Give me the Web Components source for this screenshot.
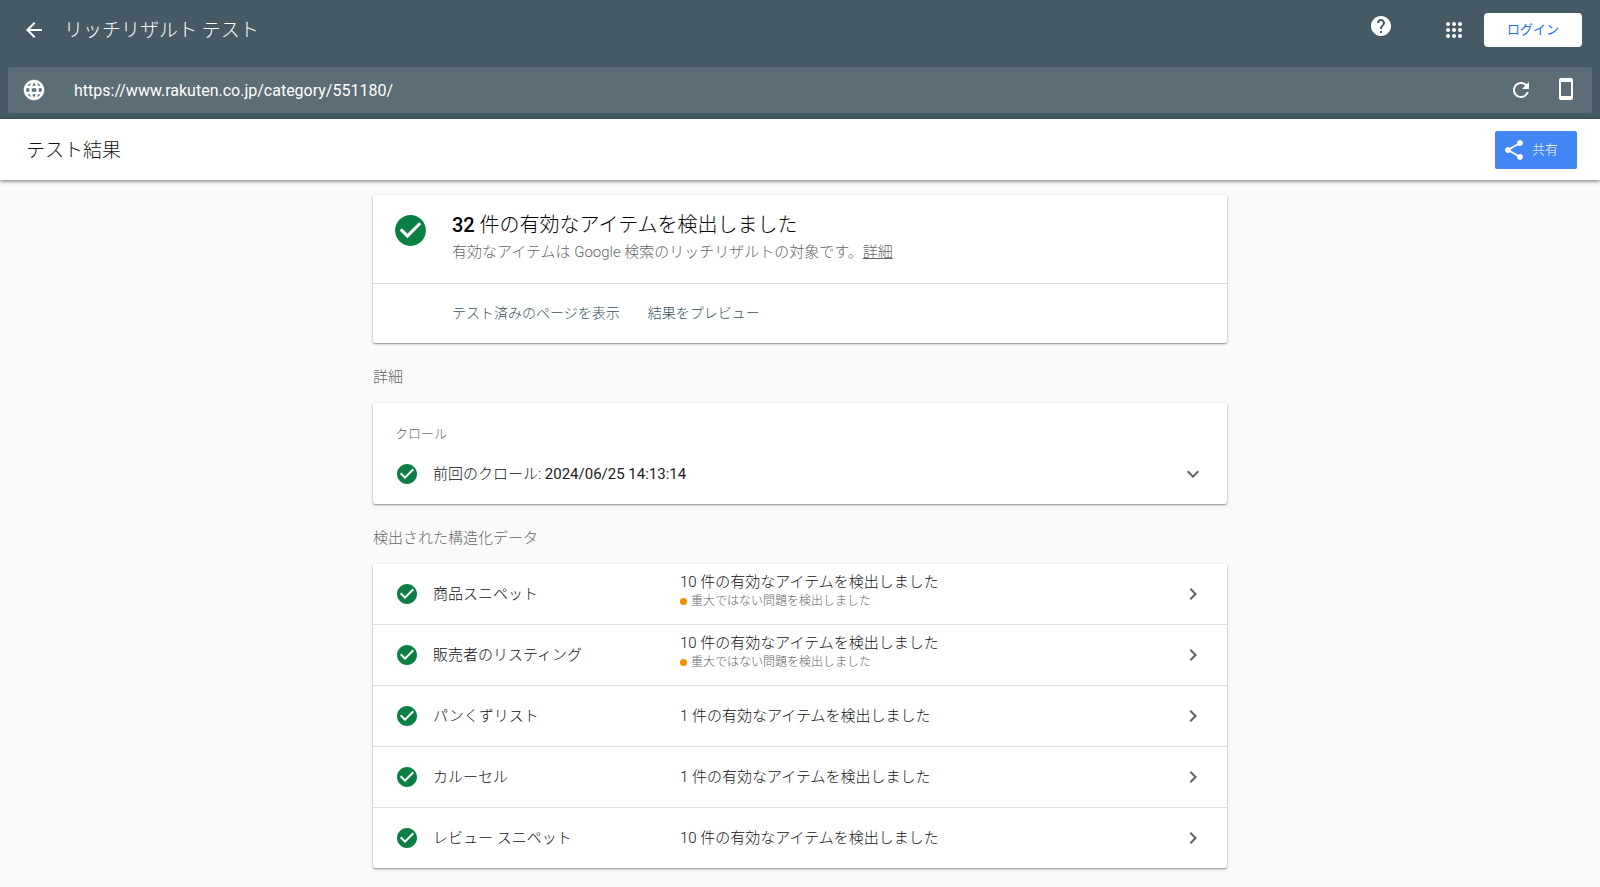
<!DOCTYPE html>
<html lang="ja">
<head>
<meta charset="utf-8">
<meta name="viewport" content="width=device-width, initial-scale=1">
<title>リッチリザルト テスト</title>
<style>
  body {
    margin: 0;
    background: #fafafa;
    color: #111;
    font-family: Roboto, "Noto Sans CJK JP", sans-serif;
    font-size: 15px;
    line-height: 20px;
    --muted: #666;
    --line: #e0e0e0;
    --slate: #455a64;
    --jp: 300;
  }
</style>
</head>
<body>
<rt-page></rt-page>

<script>
const ICONS = {
  back: '<path d="M20 11H7.83l5.59-5.59L12 4l-8 8 8 8 1.41-1.41L7.83 13H20v-2z"/>',
  globe: '<path d="M11.99 2C6.47 2 2 6.48 2 12s4.47 10 9.99 10C17.52 22 22 17.52 22 12S17.52 2 11.99 2zm6.93 6h-2.95a15.65 15.65 0 0 0-1.38-3.56A8.03 8.03 0 0 1 18.92 8zM12 4.04c.83 1.2 1.48 2.53 1.91 3.96h-3.82c.43-1.43 1.08-2.76 1.91-3.96zM4.26 14C4.1 13.36 4 12.69 4 12s.1-1.36.26-2h3.38c-.08.66-.14 1.32-.14 2s.06 1.34.14 2H4.26zm.82 2h2.95c.32 1.25.78 2.45 1.38 3.56A7.99 7.99 0 0 1 5.08 16zm2.95-8H5.08a7.99 7.99 0 0 1 4.33-3.56A15.65 15.65 0 0 0 8.03 8zM12 19.96c-.83-1.2-1.48-2.53-1.91-3.96h3.82c-.43 1.43-1.08 2.76-1.91 3.96zM14.34 14H9.66c-.09-.66-.16-1.32-.16-2s.07-1.35.16-2h4.68c.09.65.16 1.32.16 2s-.07 1.34-.16 2zm.25 5.56c.6-1.11 1.06-2.31 1.38-3.56h2.95a8.03 8.03 0 0 1-4.33 3.56zM16.36 14c.08-.66.14-1.32.14-2s-.06-1.34-.14-2h3.38c.16.64.26 1.31.26 2s-.1 1.36-.26 2h-3.38z" stroke="currentColor" stroke-width=".5"/>',
  help: '<path d="M12 2C6.48 2 2 6.48 2 12s4.48 10 10 10 10-4.48 10-10S17.52 2 12 2zm1 17h-2v-2h2v2zm2.07-7.75l-.9.92C13.45 12.9 13 13.5 13 15h-2v-.5c0-1.1.45-2.1 1.17-2.83l1.24-1.26c.37-.36.59-.86.59-1.41 0-1.1-.9-2-2-2s-2 .9-2 2H8c0-2.21 1.79-4 4-4s4 1.79 4 4c0 .88-.36 1.68-.93 2.25z"/>',
  apps: [6, 12, 18].map(y => [6, 12, 18].map(x => `<circle cx="${x}" cy="${y}" r="2"/>`).join('')).join(''),
  refresh: '<path d="M17.65 6.35A7.96 7.96 0 0 0 12 4c-4.42 0-7.99 3.58-7.99 8s3.57 8 7.99 8c3.73 0 6.84-2.55 7.73-6h-2.08A5.99 5.99 0 0 1 12 18c-3.31 0-6-2.69-6-6s2.69-6 6-6c1.66 0 3.14.69 4.22 1.78L13 11h7V4l-2.35 2.35z"/>',
  phone: '<path d="M17 1.01L7 1c-1.1 0-1.99.9-1.99 2v18c0 1.1.89 2 1.99 2h10c1.1 0 2-.9 2-2V3c0-1.1-.9-1.99-2-1.99zM17 19H7V5h10v14z"/>',
  share: '<path d="M18 16.08c-.76 0-1.44.3-1.96.77L8.91 12.7c.05-.23.09-.46.09-.7s-.04-.47-.09-.7l7.05-4.11c.54.5 1.25.81 2.04.81 1.66 0 3-1.34 3-3s-1.34-3-3-3-3 1.34-3 3c0 .24.04.47.09.7L8.04 9.81C7.5 9.31 6.79 9 6 9c-1.66 0-3 1.34-3 3s1.34 3 3 3c.79 0 1.5-.31 2.04-.81l7.12 4.16c-.05.21-.08.43-.08.65 0 1.61 1.31 2.92 2.92 2.92s2.92-1.31 2.92-2.92-1.31-2.92-2.92-2.92z"/>',
  check: '<path d="M12 2C6.48 2 2 6.48 2 12s4.48 10 10 10 10-4.48 10-10S17.52 2 12 2zm-2 15l-5-5 1.41-1.41L10 14.17l7.59-7.59L19 8l-9 9z"/>',
  down: '<path d="M16.59 8.59L12 13.17 7.41 8.59 6 10l6 6 6-6z"/>',
  right: '<path d="M10 6L8.59 7.41 13.17 12l-4.58 4.59L10 18l6-6z"/>'
};

const define = (name, html) => customElements.define(name, class extends HTMLElement {
  constructor() {
    super();
    const template = document.createElement('template');
    template.innerHTML = html;
    this.attachShadow({ mode: 'open' }).append(template.content.cloneNode(true));
  }
});

const RESET = `
  button { font: inherit; color: inherit; background: none; border: 0; padding: 0; margin: 0; cursor: pointer; text-align: left; }
  h1, h2, p, ul { margin: 0; padding: 0; font: inherit; }
`;

customElements.define('rt-icon', class extends HTMLElement {
  connectedCallback() {
    if (this.shadowRoot) return;
    this.attachShadow({ mode: 'open' }).innerHTML = `
      <style>
        :host { display: block; flex: none; width: var(--size, 24px); height: var(--size, 24px); }
        svg { display: block; width: 100%; height: 100%; fill: currentColor; }
      </style>
      <svg viewBox="0 0 24 24" aria-hidden="true">${ICONS[this.getAttribute('name')]}</svg>`;
  }
});

define('rt-app-bar', `
  <style>${RESET}
    :host { display: flex; align-items: center; height: 60px; padding: 0 18px 0 22px; color: #fff; box-sizing: border-box; }
    h1 { flex: 1; margin-left: 18px; padding-top: 2px; font-size: 19px; line-height: 24px; font-weight: var(--jp); }
    .help { margin-right: 49px; padding-bottom: 8px; }
    .apps { margin-right: 18px; }
    .login { height: 34px; padding: 0 23px; background: #fff; color: #1a73e8; border-radius: 4px; font-size: 13px; font-weight: 400; }
  </style>
  <button aria-label="戻る"><rt-icon name="back"></rt-icon></button>
  <h1><slot></slot></h1>
  <button class="help" aria-label="ヘルプ"><rt-icon name="help"></rt-icon></button>
  <button class="apps" aria-label="アプリ"><rt-icon name="apps"></rt-icon></button>
  <button class="login">ログイン</button>
`);

define('rt-url-bar', `
  <style>${RESET}
    :host { display: flex; align-items: center; height: 46px; margin: 7px 8px 0; padding: 0 14px; background: #5b6d76; color: #fff; border-radius: 2px; box-sizing: border-box; }
    input { flex: 1; min-width: 0; margin: 0 20px 0 28px; padding: 2px 0 0; border: 0; background: none; color: inherit; font: inherit; font-size: 16px; line-height: 24px; outline: 0; }
    .phone { margin-left: 21px; padding-bottom: 3px; }
  </style>
  <rt-icon name="globe"></rt-icon>
  <input type="url" aria-label="テストする URL" value="https://www.rakuten.co.jp/category/551180/">
  <button aria-label="再テスト"><rt-icon name="refresh"></rt-icon></button>
  <button class="phone" aria-label="スマートフォン"><rt-icon name="phone"></rt-icon></button>
`);

define('rt-result-bar', `
  <style>${RESET}
    :host { display: flex; align-items: center; justify-content: space-between; height: 61px; padding: 0 23px 0 26px; background: #fff; box-shadow: 0 1px 4px rgba(0,0,0,.55); box-sizing: border-box; }
    h2 { padding-top: 3px; font-size: 19px; line-height: 24px; font-weight: var(--jp); }
    button { display: flex; align-items: center; gap: 6px; height: 38px; padding: 0 19px 0 7px; background: #4285f4; color: #fff; border-radius: 2px; font-size: 13px; font-weight: var(--jp); }
  </style>
  <h2><slot></slot></h2>
  <button><rt-icon name="share"></rt-icon>共有</button>
`);

define('rt-card', `
  <style>
    :host { display: block; background: #fff; border-radius: 2px; box-shadow: 0 1px 3px rgba(0,0,0,.3), 0 1px 1px rgba(0,0,0,.2); }
  </style>
  <slot></slot>
`);

define('rt-section', `
  <style>${RESET}
    :host { display: block; margin-top: 24px; }
    h2 { margin-bottom: 16px; color: var(--muted); font-weight: var(--jp); }
  </style>
  <h2><slot name="title"></slot></h2>
  <rt-card><slot></slot></rt-card>
`);

define('rt-summary', `
  <style>${RESET}
    :host { display: block; }
    .head { display: flex; gap: 23px; height: 88px; padding: 17px 19px 0; box-sizing: border-box; }
    rt-icon { --size: 37px; color: #0b8043; }
    h2 { font-size: 20px; line-height: 26px; font-weight: var(--jp); color: #000; }
    b { font-weight: 500; }
    p { color: var(--muted); font-weight: var(--jp); line-height: 28px; }
    a { color: inherit; }
    .actions { display: flex; gap: 28px; height: 60px; padding: 0 79px 2px; border-top: 1px solid var(--line); color: #37505c; font-size: 14px; box-sizing: border-box; }
    .actions button { font-weight: var(--jp); }
  </style>
  <div class="head">
    <rt-icon name="check"></rt-icon>
    <div>
      <h2><b>32</b> 件の有効なアイテムを検出しました</h2>
      <p>有効なアイテムは Google 検索のリッチリザルトの対象です。<a href="#details">詳細</a></p>
    </div>
  </div>
  <div class="actions">
    <button>テスト済みのページを表示</button>
    <button>結果をプレビュー</button>
  </div>
`);

define('rt-crawl', `
  <style>${RESET}
    :host { display: block; padding: 21px 22px 18px; }
    p { color: var(--muted); font-size: 13px; font-weight: var(--jp); }
    button { display: flex; align-items: center; gap: 14px; width: 100%; margin-top: 18px; }
    rt-icon { color: #0b8043; }
    rt-icon[name=down] { color: #616161; }
    .text { flex: 1; font-weight: var(--jp); }
    time { font-weight: 400; color: #212121; }
  </style>
  <p>クロール</p>
  <button aria-expanded="false">
    <rt-icon name="check"></rt-icon>
    <span class="text">前回のクロール: <time datetime="2024-06-25T14:13:14">2024/06/25 14:13:14</time></span>
    <rt-icon name="down"></rt-icon>
  </button>
`);

define('rt-item', `
  <style>${RESET}
    :host { display: block; height: 61px; border-top: 1px solid var(--line); box-sizing: border-box; }
    :host(:first-of-type) { height: 60px; border-top: 0; }
    button { display: grid; grid-template-columns: 24px 233px 1fr 24px; column-gap: 14px; align-items: center; width: 100%; height: 100%; padding: 0 22px; font-weight: var(--jp); }
    rt-icon { color: #0b8043; }
    rt-icon[name=right] { color: #616161; }
    .status { display: block; }
    ::slotted([slot=note]) { display: flex; align-items: center; gap: 4px; color: var(--muted); font-size: 12px; line-height: 18px; padding-bottom: 6px; }
    ::slotted([slot=note])::before { content: ""; width: 7px; height: 7px; border-radius: 50%; background: #f29100; }
  </style>
  <button>
    <rt-icon name="check"></rt-icon>
    <slot name="name"></slot>
    <span class="status"><slot></slot><slot name="note"></slot></span>
    <rt-icon name="right"></rt-icon>
  </button>
`);

define('rt-page', `
  <style>
    :host { display: block; }
    header { background: var(--slate); padding-bottom: 6px; }
    main { max-width: 854px; margin: 0 auto; padding: 15px 0 19px; }
  </style>
  <header>
    <rt-app-bar>リッチリザルト テスト</rt-app-bar>
    <rt-url-bar></rt-url-bar>
  </header>
  <rt-result-bar>テスト結果</rt-result-bar>
  <main>
    <rt-card><rt-summary></rt-summary></rt-card>
    <rt-section id="details">
      <span slot="title">詳細</span>
      <rt-crawl></rt-crawl>
    </rt-section>
    <rt-section>
      <span slot="title">検出された構造化データ</span>
      <rt-item><span slot="name">商品スニペット</span>10 件の有効なアイテムを検出しました<span slot="note">重大ではない問題を検出しました</span></rt-item>
      <rt-item><span slot="name">販売者のリスティング</span>10 件の有効なアイテムを検出しました<span slot="note">重大ではない問題を検出しました</span></rt-item>
      <rt-item><span slot="name">パンくずリスト</span>1 件の有効なアイテムを検出しました</rt-item>
      <rt-item><span slot="name">カルーセル</span>1 件の有効なアイテムを検出しました</rt-item>
      <rt-item><span slot="name">レビュー スニペット</span>10 件の有効なアイテムを検出しました</rt-item>
    </rt-section>
  </main>
`);
</script>
</body>
</html>
